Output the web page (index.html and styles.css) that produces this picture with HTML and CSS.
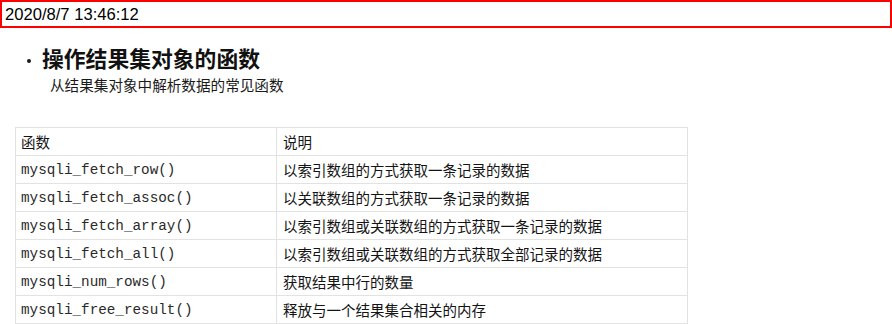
FILE: index.html
```html
<!DOCTYPE html>
<html lang="zh">
<head>
<meta charset="utf-8">
<link rel="stylesheet" href="styles.css">
</head>
<body>
<div class="stamp">2020/8/7 13:46:12</div>
<section class="slide">
  <div class="title-row">
    <span class="bullet"></span>
    <h1 class="title">操作结果集对象的函数</h1>
  </div>
  <p class="subtitle">从结果集对象中解析数据的常见函数</p>
  <table class="fn-table">
    <tr><td class="c1 head">函数</td><td class="c2">说明</td></tr>
    <tr><td class="c1 code">mysqli_fetch_row()</td><td class="c2">以索引数组的方式获取一条记录的数据</td></tr>
    <tr><td class="c1 code">mysqli_fetch_assoc()</td><td class="c2">以关联数组的方式获取一条记录的数据</td></tr>
    <tr><td class="c1 code">mysqli_fetch_array()</td><td class="c2">以索引数组或关联数组的方式获取一条记录的数据</td></tr>
    <tr><td class="c1 code">mysqli_fetch_all()</td><td class="c2">以索引数组或关联数组的方式获取全部记录的数据</td></tr>
    <tr><td class="c1 code">mysqli_num_rows()</td><td class="c2">获取结果中行的数量</td></tr>
    <tr><td class="c1 code">mysqli_free_result()</td><td class="c2">释放与一个结果集合相关的内存</td></tr>
  </table>
</section>
</body>
</html>
```
FILE: styles.css
```css
html, body {
  margin: 0;
  padding: 0;
  background: #ffffff;
  width: 892px;
  height: 324px;
  overflow: hidden;
}
body {
  font-family: "Noto Sans CJK SC", "Liberation Sans", sans-serif;
  color: #1a1a1a;
}
.stamp {
  box-sizing: border-box;
  width: 892px;
  height: 28px;
  border: 2px solid #ff0000;
  padding-left: 3px;
  font-family: "Liberation Sans", Arial, sans-serif;
  font-size: 16.6px;
  line-height: 25px;
  color: #000;
}
.slide {
  padding: 16px 0 0 15px;
}
.title-row {
  display: flex;
  align-items: center;
  height: 28px;
}
.bullet {
  width: 4px;
  height: 4px;
  border-radius: 50%;
  background: #1a1a1a;
  margin: 6px 11px 0 12px;
}
.title {
  margin: 0;
  font-size: 21.8px;
  font-weight: 700;
  line-height: 28px;
  color: #111;
}
.subtitle {
  margin: 3px 0 0 35px;
  font-size: 14.6px;
  line-height: 20px;
  color: #1a1a1a;
}
.fn-table {
  margin-top: 32px;
  border-collapse: collapse;
  width: 673px;
}
.fn-table td {
  border: 1px solid #e2e2e2;
  height: 27px;
  padding: 0 5px 0 6px;
  vertical-align: middle;
  font-size: 14.5px;
  line-height: 20px;
  color: #141414;
}
.fn-table .c1 {
  width: 250px;
  padding-left: 5px;
}
.fn-table .code {
  font-family: "Liberation Mono", "Courier New", monospace;
  font-size: 14.3px;
  color: #2a2a2a;
}
```
